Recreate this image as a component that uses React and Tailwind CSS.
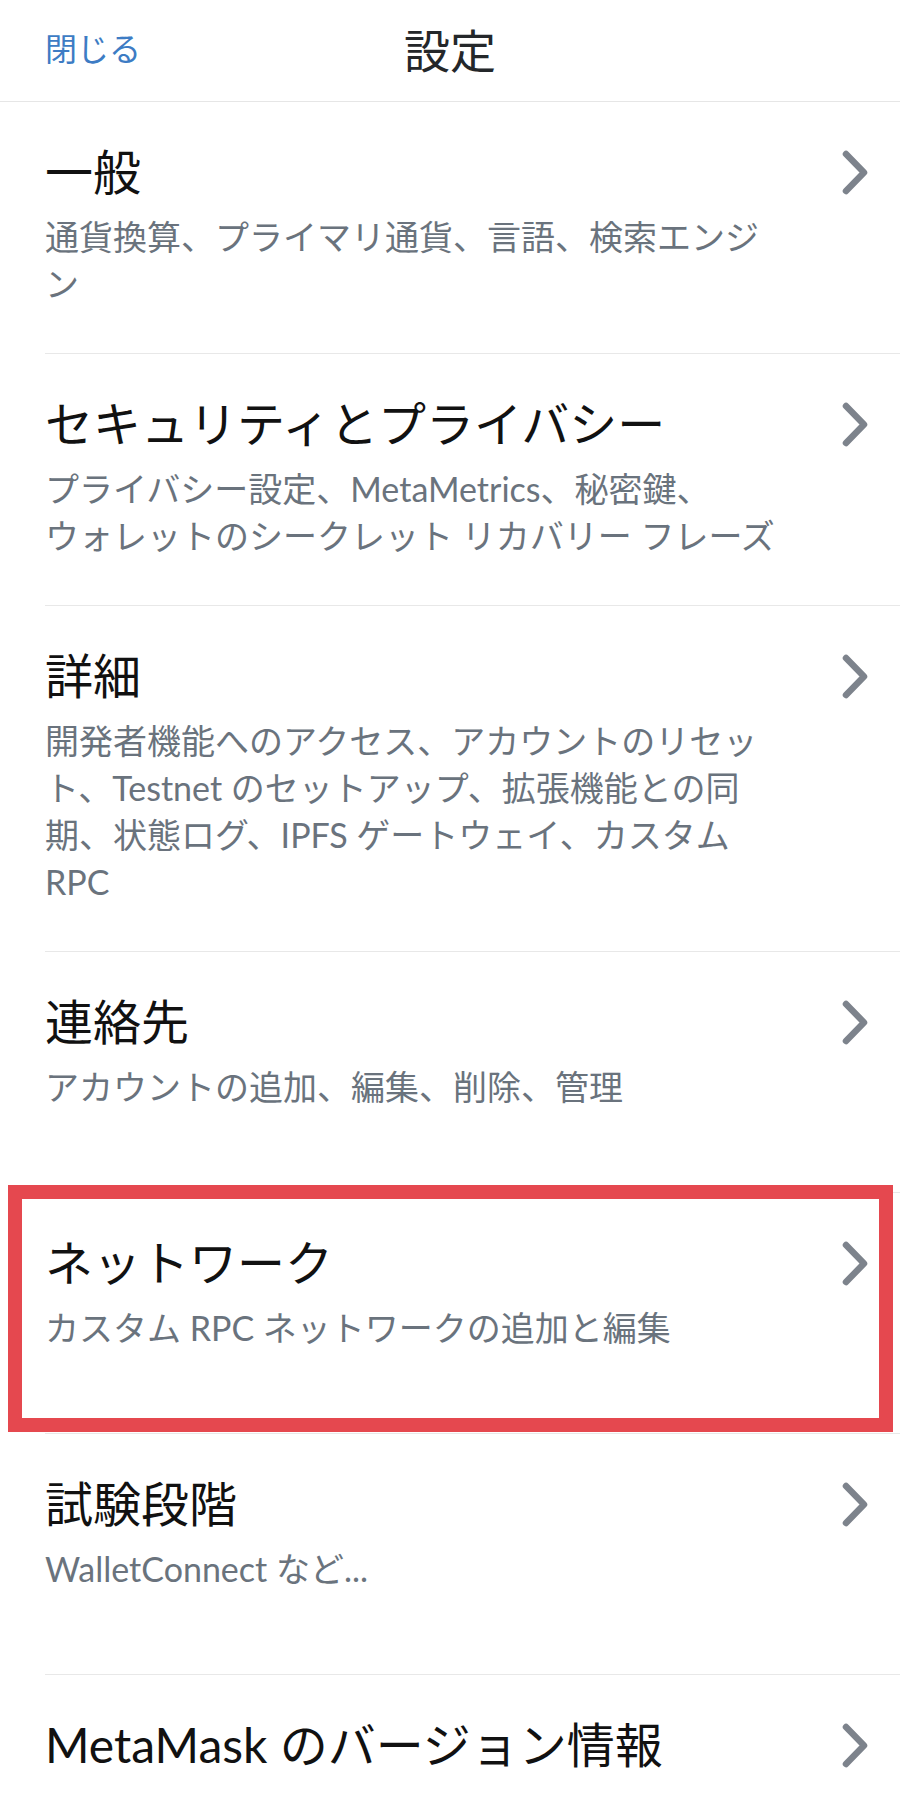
import React from 'react';

const FONT = { fontFamily: '"Lato", "Noto Sans CJK JP", sans-serif' };

const ITEMS = [
  { title: '一般', lines: ['通貨換算、プライマリ通貨、言語、検索エンジ', 'ン'] },
  {
    title: 'セキュリティとプライバシー',
    lines: ['プライバシー設定、MetaMetrics、秘密鍵、', 'ウォレットのシークレット リカバリー フレーズ'],
  },
  {
    title: '詳細',
    lines: [
      '開発者機能へのアクセス、アカウントのリセッ',
      'ト、Testnet のセットアップ、拡張機能との同',
      '期、状態ログ、IPFS ゲートウェイ、カスタム',
      'RPC',
    ],
  },
  { title: '連絡先', lines: ['アカウントの追加、編集、削除、管理'] },
  { title: 'ネットワーク', lines: ['カスタム RPC ネットワークの追加と編集'], marked: true },
  { title: '試験段階', lines: ['WalletConnect など...'] },
  { title: 'MetaMask のバージョン情報', lines: [] },
];

function Chevron() {
  return (
    <svg width="26" height="45" viewBox="0 0 26 45" fill="none">
      <path d="M4 4 L22 22.5 L4 41" stroke="#7d838c" strokeWidth="6.5" strokeLinecap="round" strokeLinejoin="round" />
    </svg>
  );
}

function SettingsRow({ item }) {
  return (
    <div className="relative pl-[45px]">
      <div className="flex min-h-[241px] border-b border-[#e8e8e8] pt-[42px] pb-[46px] pr-[32px]">
        <div className="flex-1">
          <p className="text-[48px] leading-[56px] text-[#111111]">{item.title}</p>
          {item.lines.length > 0 && (
            <div className="mt-[13px] text-[34px] leading-[47px] text-[#6a737d] whitespace-nowrap">
              {item.lines.map((l, i) => (
                <div key={i}>{l}</div>
              ))}
            </div>
          )}
        </div>
        <div className="flex h-[56px] items-center">
          <Chevron />
        </div>
      </div>
      {/* annotation frame */}
      {item.marked && (
        <div className="pointer-events-none absolute top-[-8px] left-[8px] right-[7px] bottom-[2px] border-[14px] border-[#e5484f]" />
      )}
    </div>
  );
}

export default function App() {
  return (
    <div className="w-[900px] h-[1795px] overflow-hidden bg-white" style={FONT}>
      <header className="relative flex h-[102px] items-center justify-center border-b border-[#e6e6e6]">
        <button className="absolute left-[45px] top-[28px] text-[32px] leading-[42px] text-[#3d7cc4]">閉じる</button>
        <h1 className="text-[46px] leading-[56px] text-[#24272a]">設定</h1>
      </header>
      {ITEMS.map((item) => (
        <SettingsRow key={item.title} item={item} />
      ))}
    </div>
  );
}
